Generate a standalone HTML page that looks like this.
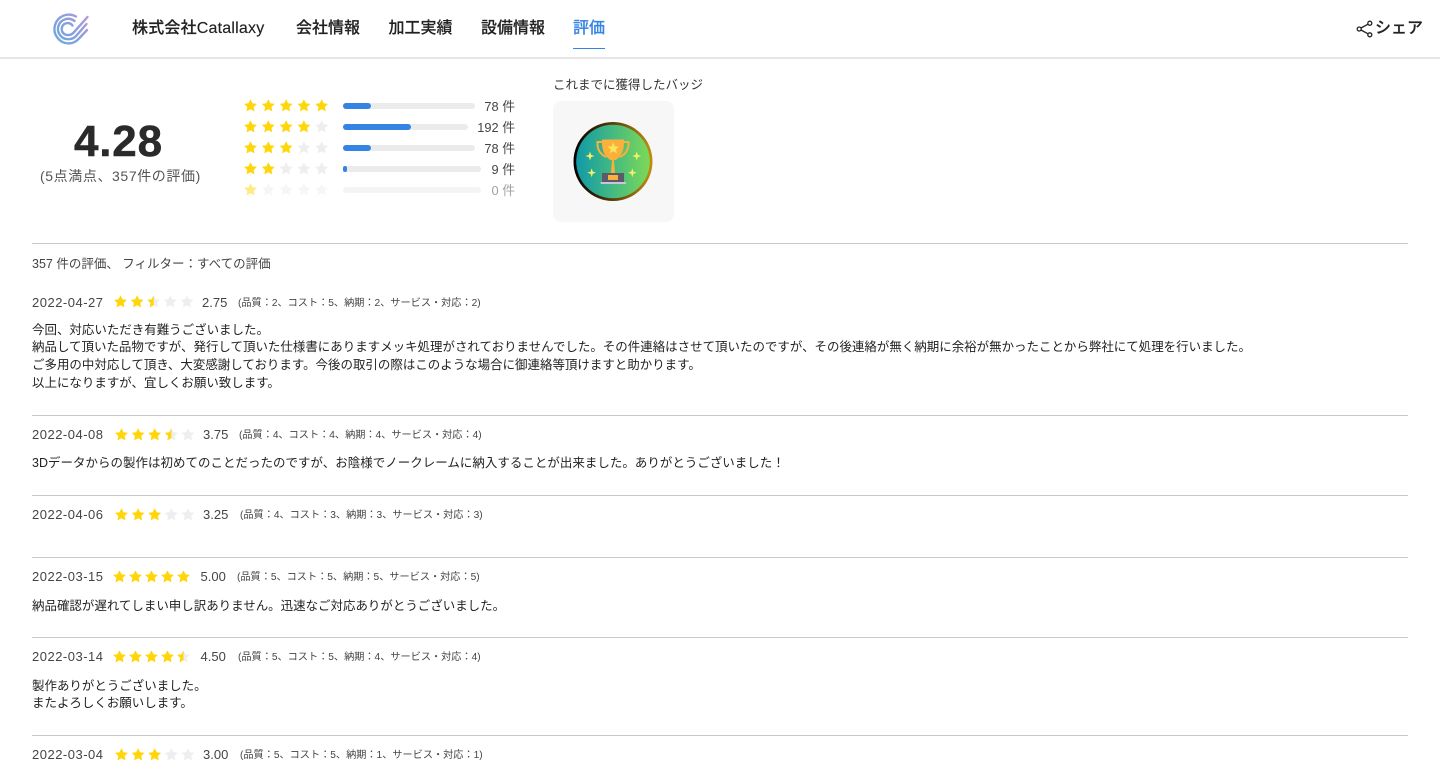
<!DOCTYPE html>
<html lang="ja"><head><meta charset="utf-8"><title>評価</title>
<style>
*{box-sizing:border-box}
html,body{margin:0;padding:0;background:#fff;width:1440px;height:781px;overflow:hidden}
body{position:relative;font-family:"Liberation Sans","Noto Sans CJK JP",sans-serif;color:#222}
.a{position:absolute;white-space:nowrap}
.nav{top:17.5px;font-size:16px;line-height:22px;font-weight:500;color:#222;-webkit-text-stroke:.15px #222}
.hr{position:absolute;left:32px;width:1376px;height:1px;background:#c9c9c9}
.bar{position:absolute;height:6px;border-radius:3px;background:#ebebeb;left:343px}
.fill{position:absolute;left:0;top:0;height:6px;border-radius:3px;background:#3584e4}
.cnt{right:925px;font-size:12.8px;line-height:18px;color:#444}
.date{left:32px;font-size:13px;line-height:18px;color:#444;letter-spacing:.5px}
.score{font-size:13px;line-height:18px;color:#444}
.det{font-size:10.17px;line-height:16px;color:#444}
.txt{left:32px;font-size:12.47px;line-height:17.75px;color:#222}
svg.s{position:absolute;overflow:visible}
</style></head><body>
<svg width="0" height="0" style="position:absolute"><defs>
<path id="st" d="M6.5 .3 8.5 4.3 12.9 4.9 9.7 8 10.5 12.4 6.5 10.3 2.5 12.4 3.3 8 .1 4.9 4.5 4.3Z"/>
<clipPath id="hf"><rect x="0" y="0" width="6.5" height="13"/></clipPath>
<linearGradient id="lg" gradientUnits="userSpaceOnUse" x1="2" y1="30" x2="34" y2="2"><stop offset="0" stop-color="#6fa8dc"/><stop offset=".55" stop-color="#8a9fdc"/><stop offset="1" stop-color="#b79ad8"/></linearGradient>
<linearGradient id="ring" x1="0" y1="0" x2="1" y2="0"><stop offset="0" stop-color="#000"/><stop offset=".5" stop-color="#5a3d05"/><stop offset="1" stop-color="#c28f12"/></linearGradient>
<linearGradient id="grn" x1="0" y1="0" x2="1" y2="0"><stop offset="0" stop-color="#0f9aa8"/><stop offset="1" stop-color="#7cd958"/></linearGradient>
<path id="sp" d="M0-4.5 1.1-1.1 4.5 0 1.1 1.1 0 4.5-1.1 1.1-4.5 0-1.1-1.1Z" fill="#f6f06a"/>
</defs></svg>

<div style="position:absolute;left:0;top:57px;width:1440px;height:2px;background:#e6e6e6"></div>
<svg class="s" style="left:53px;top:13px" width="36" height="32" viewBox="0 0 36 32" fill="none" stroke="url(#lg)" stroke-width="2.4" stroke-linecap="round">
<path d="M23 3.5A14.4 14.4 0 1 0 15.5 30.4C20 30.4 23.5 28.5 26 25.5L34 17"/>
<path d="M21.5 8A10.2 10.2 0 1 0 15.5 26.2C19 26.2 21.5 25 23.5 22.5L33.5 11"/>
<path d="M19.5 12.5A6 6 0 1 0 15.5 22C18 22 19.5 21 21 19.2L34.5 4"/>
</svg>
<div class="a nav" style="left:132px;top:18px;letter-spacing:.2px">株式会社Catallaxy</div>
<div class="a nav" style="left:296px">会社情報</div>
<div class="a nav" style="left:388.5px">加工実績</div>
<div class="a nav" style="left:481px">設備情報</div>
<div class="a nav" style="left:573px;color:#3584e4;-webkit-text-stroke:.15px #3584e4">評価</div>
<div style="position:absolute;left:573px;top:47.5px;width:32px;height:1.5px;background:#3584e4"></div>
<svg class="s" style="left:1356px;top:20px" width="18" height="18" viewBox="0 0 18 18" fill="none" stroke="#222" stroke-width="1.3">
<circle cx="3.2" cy="9" r="2"/><circle cx="13.8" cy="3.2" r="2"/><circle cx="13.8" cy="14.8" r="2"/><path d="M5 8 12 4.2M5 10 12 13.8"/>
</svg>
<div class="a nav" style="left:1375px;top:17.5px">シェア</div>

<div class="a" style="left:74px;top:117px;font-size:44px;line-height:50px;font-weight:700;letter-spacing:.8px;color:#2a2a2a;-webkit-text-stroke:.5px #2a2a2a">4.28</div>
<div class="a" style="left:40px;top:166px;font-size:14px;line-height:20px;color:#555;letter-spacing:.6px">(5点満点、357件の評価)</div>

<svg class="s" style="left:244px;top:99.3px" width="90" height="100" fill="#ffd60a">
<g><use href="#st" x="0" y="0"/><use href="#st" x="17.8" y="0"/><use href="#st" x="35.6" y="0"/><use href="#st" x="53.4" y="0"/><use href="#st" x="71.2" y="0"/></g>
<g transform="translate(0,21)"><use href="#st" x="0"/><use href="#st" x="17.8"/><use href="#st" x="35.6"/><use href="#st" x="53.4"/><use href="#st" x="71.2" fill="#eee"/></g>
<g transform="translate(0,42)"><use href="#st" x="0"/><use href="#st" x="17.8"/><use href="#st" x="35.6"/><use href="#st" x="53.4" fill="#eee"/><use href="#st" x="71.2" fill="#eee"/></g>
<g transform="translate(0,63)"><use href="#st" x="0"/><use href="#st" x="17.8"/><use href="#st" x="35.6" fill="#eee"/><use href="#st" x="53.4" fill="#eee"/><use href="#st" x="71.2" fill="#eee"/></g>
<g transform="translate(0,84)" opacity=".5"><use href="#st" x="0"/><use href="#st" x="17.8" fill="#eee"/><use href="#st" x="35.6" fill="#eee"/><use href="#st" x="53.4" fill="#eee"/><use href="#st" x="71.2" fill="#eee"/></g>
</svg>

<div class="bar" style="top:102.5px;width:132px"><div class="fill" style="width:28px"></div></div>
<div class="bar" style="top:123.5px;width:125px"><div class="fill" style="width:68px"></div></div>
<div class="bar" style="top:144.5px;width:132px"><div class="fill" style="width:28px"></div></div>
<div class="bar" style="top:165.5px;width:138px"><div class="fill" style="width:3.5px"></div></div>
<div class="bar" style="top:186.5px;width:138px;opacity:.55"></div>
<div class="a cnt" style="top:98px">78 件</div>
<div class="a cnt" style="top:119px">192 件</div>
<div class="a cnt" style="top:140px">78 件</div>
<div class="a cnt" style="top:161px">9 件</div>
<div class="a cnt" style="top:182px;opacity:.5">0 件</div>

<div class="a" style="left:553px;top:76px;font-size:12.5px;line-height:18px;color:#333">これまでに獲得したバッジ</div>
<div style="position:absolute;left:553px;top:101px;width:121px;height:121px;border-radius:8px;background:#f7f7f7"></div>
<svg class="s" style="left:573px;top:121px" width="81" height="81" viewBox="0 0 81 81">
<circle cx="40" cy="40.5" r="39.5" fill="url(#ring)"/>
<circle cx="40" cy="40.5" r="36.8" fill="url(#grn)"/>
<path d="M29 18.5H51V22C51 30 48 36 42.5 39H37.5C32 36 29 30 29 22Z" fill="#fbb03b"/>
<path d="M30 21H24.5C24 28 27 33 33 36M50 21H55.5C56 28 53 33 47 36" fill="none" stroke="#fbb03b" stroke-width="2"/>
<path d="M39 39H41L42 52H38Z" fill="#fbb03b"/>
<rect x="29" y="52" width="22" height="9" fill="#5c5a68"/><rect x="35" y="54" width="10" height="5" fill="#fbb03b"/>
<rect x="27.7" y="61" width="25.3" height="2" fill="#c9c4e4"/>
<path d="M40.3 21.5 41.9 25.3 46 25.7 42.9 28.4 43.9 32.4 40.3 30.3 36.7 32.4 37.7 28.4 34.6 25.7 38.7 25.3Z" fill="#f8e45c"/>
<use href="#sp" x="17" y="35"/><use href="#sp" x="63.7" y="35"/><use href="#sp" x="18.7" y="51.7"/><use href="#sp" x="59.3" y="51.7"/>
</svg>

<div class="hr" style="top:243px"></div>
<div class="a" style="left:32px;top:255px;font-size:12.5px;line-height:18px;color:#444">357 件の評価、 フィルター：すべての評価</div>

<!-- review 1 -->
<div class="a date" style="top:294px">2022-04-27</div>
<svg class="s" style="left:114px;top:295px" width="80" height="14" fill="#eee">
<use href="#st" x="0" fill="#ffd60a"/><use href="#st" x="16.6" fill="#ffd60a"/><use href="#st" x="33.2"/><use href="#st" x="33.2" fill="#ffd60a" clip-path="url(#hf)"/><use href="#st" x="49.8"/><use href="#st" x="66.4"/></svg>
<div class="a score" style="left:202px;top:294px">2.75</div>
<div class="a det" style="left:238px;top:295.5px">(品質：2、コスト：5、納期：2、サービス・対応：2)</div>
<div class="a txt" style="top:321.6px">今回、対応いただき有難うございました。<br>納品して頂いた品物ですが、発行して頂いた仕様書にありますメッキ処理がされておりませんでした。その件連絡はさせて頂いたのですが、その後連絡が無く納期に余裕が無かったことから弊社にて処理を行いました。<br>ご多用の中対応して頂き、大変感謝しております。今後の取引の際はこのような場合に御連絡等頂けますと助かります。<br>以上になりますが、宜しくお願い致します。</div>
<div class="hr" style="top:415px"></div>

<!-- review 2 -->
<div class="a date" style="top:426px">2022-04-08</div>
<svg class="s" style="left:115px;top:428px" width="80" height="14" fill="#eee">
<use href="#st" x="0" fill="#ffd60a"/><use href="#st" x="16.6" fill="#ffd60a"/><use href="#st" x="33.2" fill="#ffd60a"/><use href="#st" x="49.8"/><use href="#st" x="49.8" fill="#ffd60a" clip-path="url(#hf)"/><use href="#st" x="66.4"/></svg>
<div class="a score" style="left:203px;top:426px">3.75</div>
<div class="a det" style="left:239px;top:427.5px">(品質：4、コスト：4、納期：4、サービス・対応：4)</div>
<div class="a txt" style="top:454.5px;letter-spacing:.03px">3Dデータからの製作は初めてのことだったのですが、お陰様でノークレームに納入することが出来ました。ありがとうございました！</div>
<div class="hr" style="top:495px"></div>

<!-- review 3 -->
<div class="a date" style="top:506px">2022-04-06</div>
<svg class="s" style="left:115px;top:508px" width="80" height="14" fill="#eee">
<use href="#st" x="0" fill="#ffd60a"/><use href="#st" x="16.6" fill="#ffd60a"/><use href="#st" x="33.2" fill="#ffd60a"/><use href="#st" x="49.8"/><use href="#st" x="66.4"/></svg>
<div class="a score" style="left:203px;top:506px">3.25</div>
<div class="a det" style="left:240px;top:507.5px">(品質：4、コスト：3、納期：3、サービス・対応：3)</div>
<div class="hr" style="top:557px"></div>

<!-- review 4 -->
<div class="a date" style="top:568px">2022-03-15</div>
<svg class="s" style="left:113px;top:570px" width="80" height="14" fill="#ffd60a">
<use href="#st" x="0"/><use href="#st" x="16"/><use href="#st" x="32"/><use href="#st" x="48"/><use href="#st" x="64"/></svg>
<div class="a score" style="left:200.5px;top:568px">5.00</div>
<div class="a det" style="left:237px;top:569.5px">(品質：5、コスト：5、納期：5、サービス・対応：5)</div>
<div class="a txt" style="top:597.5px">納品確認が遅れてしまい申し訳ありません。迅速なご対応ありがとうございました。</div>
<div class="hr" style="top:637px"></div>

<!-- review 5 -->
<div class="a date" style="top:648px">2022-03-14</div>
<svg class="s" style="left:113px;top:650px" width="80" height="14" fill="#ffd60a">
<use href="#st" x="0"/><use href="#st" x="16"/><use href="#st" x="32"/><use href="#st" x="48"/><use href="#st" x="64" fill="#eee"/><use href="#st" x="64" clip-path="url(#hf)"/></svg>
<div class="a score" style="left:200.5px;top:648px">4.50</div>
<div class="a det" style="left:238px;top:649.5px">(品質：5、コスト：5、納期：4、サービス・対応：4)</div>
<div class="a txt" style="top:677.5px">製作ありがとうございました。<br>またよろしくお願いします。</div>
<div class="hr" style="top:735px"></div>

<!-- review 6 -->
<div class="a date" style="top:746px">2022-03-04</div>
<svg class="s" style="left:115px;top:748px" width="80" height="14" fill="#eee">
<use href="#st" x="0" fill="#ffd60a"/><use href="#st" x="16.6" fill="#ffd60a"/><use href="#st" x="33.2" fill="#ffd60a"/><use href="#st" x="49.8"/><use href="#st" x="66.4"/></svg>
<div class="a score" style="left:203px;top:746px">3.00</div>
<div class="a det" style="left:240px;top:747.5px">(品質：5、コスト：5、納期：1、サービス・対応：1)</div>
</body></html>
